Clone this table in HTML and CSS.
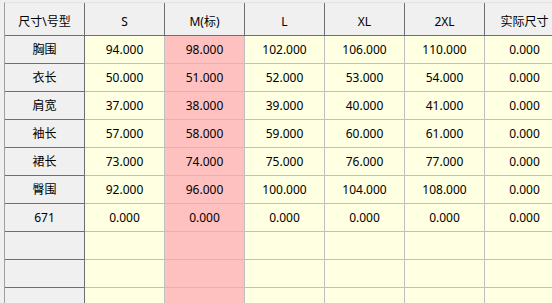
FILE: index.html
```html
<!DOCTYPE html>
<html>
<head>
<meta charset="utf-8">
<link rel="stylesheet" href="styles.css">
</head>
<body>
<div class="grid">
  <div class="cell hd corner">尺寸\号型</div>
  <div class="cell hd">S</div>
  <div class="cell hd">M(标)</div>
  <div class="cell hd">L</div>
  <div class="cell hd">XL</div>
  <div class="cell hd">2XL</div>
  <div class="cell hd">实际尺寸</div>

  <div class="cell rh">胸围</div>
  <div class="cell d">94.000</div><div class="cell d m">98.000</div><div class="cell d">102.000</div><div class="cell d">106.000</div><div class="cell d">110.000</div><div class="cell d">0.000</div>

  <div class="cell rh">衣长</div>
  <div class="cell d">50.000</div><div class="cell d m">51.000</div><div class="cell d">52.000</div><div class="cell d">53.000</div><div class="cell d">54.000</div><div class="cell d">0.000</div>

  <div class="cell rh">肩宽</div>
  <div class="cell d">37.000</div><div class="cell d m">38.000</div><div class="cell d">39.000</div><div class="cell d">40.000</div><div class="cell d">41.000</div><div class="cell d">0.000</div>

  <div class="cell rh">袖长</div>
  <div class="cell d">57.000</div><div class="cell d m">58.000</div><div class="cell d">59.000</div><div class="cell d">60.000</div><div class="cell d">61.000</div><div class="cell d">0.000</div>

  <div class="cell rh">裙长</div>
  <div class="cell d">73.000</div><div class="cell d m">74.000</div><div class="cell d">75.000</div><div class="cell d">76.000</div><div class="cell d">77.000</div><div class="cell d">0.000</div>

  <div class="cell rh">臀围</div>
  <div class="cell d">92.000</div><div class="cell d m">96.000</div><div class="cell d">100.000</div><div class="cell d">104.000</div><div class="cell d">108.000</div><div class="cell d">0.000</div>

  <div class="cell rh">671</div>
  <div class="cell d">0.000</div><div class="cell d m">0.000</div><div class="cell d">0.000</div><div class="cell d">0.000</div><div class="cell d">0.000</div><div class="cell d">0.000</div>

  <div class="cell rh"></div>
  <div class="cell d"></div><div class="cell d m"></div><div class="cell d"></div><div class="cell d"></div><div class="cell d"></div><div class="cell d"></div>

  <div class="cell rh"></div>
  <div class="cell d"></div><div class="cell d m"></div><div class="cell d"></div><div class="cell d"></div><div class="cell d"></div><div class="cell d"></div>

  <div class="cell rh"></div>
  <div class="cell d"></div><div class="cell d m"></div><div class="cell d"></div><div class="cell d"></div><div class="cell d"></div><div class="cell d"></div>

  <div class="cell rh"></div>
  <div class="cell d"></div><div class="cell d m"></div><div class="cell d"></div><div class="cell d"></div><div class="cell d"></div><div class="cell d"></div>
</div>
</body>
</html>
```

FILE: styles.css
```css
html, body {
  margin: 0;
  padding: 0;
  background: #f0f0f0;
  overflow: hidden;
  width: 552px;
  height: 303px;
}
.grid {
  margin: 2px 0 0 4px;
  border-top: 1px solid #e3e3e3;
  border-left: 1px solid #a0a0a0;
  display: grid;
  grid-template-columns: repeat(7, 80px);
  grid-template-rows: 33px repeat(10, 28px);
  width: 560px;
  font-family: "Noto Sans", "Noto Sans CJK SC", sans-serif;
  font-size: 12px;
  color: #000;
}
.cell {
  box-sizing: border-box;
  display: flex;
  align-items: center;
  justify-content: center;
  white-space: nowrap;
  line-height: 16px;
}
.hd {
  background: #f0f0f0;
  border-right: 1px solid #6e6e6e;
  border-bottom: 1px solid #6e6e6e;
  padding-top: 6px;
}
.rh {
  background: #f0f0f0;
  border-right: 1px solid #6e6e6e;
  border-bottom: 1px solid #6e6e6e;
}
.d {
  background: #ffffe1;
  border-right: 1px solid #c0c0c0;
  border-bottom: 1px solid #c0c0c0;
}
.d.m {
  background: #ffc0c0;
}
```
